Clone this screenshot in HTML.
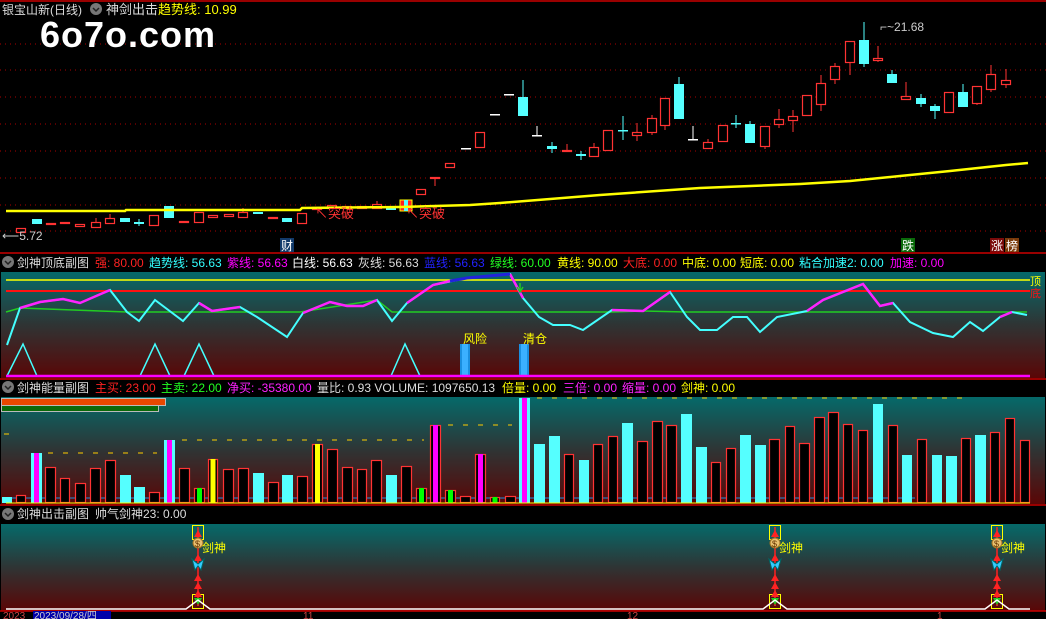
<!DOCTYPE html>
<html><head><meta charset="utf-8">
<style>
html,body{margin:0;padding:0;background:#000;width:1046px;height:619px;overflow:hidden}
svg{display:block;font-family:"Liberation Sans","Noto Sans CJK SC",sans-serif}
</style></head><body>
<svg id="s" width="1046" height="619" xmlns="http://www.w3.org/2000/svg" font-size="12">
<defs>
<linearGradient id="g" x1="0" y1="0" x2="0" y2="1">
<stop offset="0" stop-color="#056a6a"/><stop offset="0.5" stop-color="#2f3434"/><stop offset="1" stop-color="#5a0606"/>
</linearGradient>
</defs>
<rect x="0" y="0" width="1046" height="619" fill="#000"/>
<line x1="0" y1="1" x2="1046" y2="1" stroke="#c00" stroke-width="1.5"/>
<g stroke="#a00" stroke-dasharray="1,4" stroke-width="1">
<line x1="0" y1="44" x2="1046" y2="44"/><line x1="0" y1="70" x2="1046" y2="70"/><line x1="0" y1="97" x2="1046" y2="97"/><line x1="0" y1="124" x2="1046" y2="124"/><line x1="0" y1="151" x2="1046" y2="151"/><line x1="0" y1="178" x2="1046" y2="178"/><line x1="0" y1="205" x2="1046" y2="205"/><line x1="0" y1="231" x2="1046" y2="231"/>
</g>
<g id="cand"></g>
<polyline fill="none" stroke="#ff0" stroke-width="2.5" points="6,211 125,211 126,210 300,210 302,208 400,207 470,205 500,203 600,195 700,188 800,184 850,181 900,176 950,171 1006,165 1028,163"/>
<text x="2" y="14" fill="#ddd" font-size="12">银宝山新(日线)</text>
<circle cx="96" cy="9" r="6" fill="#777"/><path d="M93,8 l3,3 l3,-3" stroke="#222" fill="none" stroke-width="1.5"/>
<text x="106" y="14" fill="#ddd" font-size="13">神剑出击</text>
<text x="158" y="14" fill="#ff0" font-size="13">趋势线: 10.99</text>
<text x="40" y="47" fill="#fff" font-size="36" font-weight="bold" letter-spacing="1">6o7o.com</text>
<text x="315" y="218" fill="#f33" font-size="13">↖突破</text>
<text x="406" y="218" fill="#f33" font-size="13">↖突破</text>
<text x="2" y="240" fill="#ccc" font-size="12">⟵5.72</text>
<text x="880" y="31" fill="#ccc" font-size="12">⌐~21.68</text>
<rect x="280" y="238" width="14" height="14" fill="#123a6a"/><text x="281" y="250" fill="#fff">财</text>
<rect x="901" y="238" width="14" height="14" fill="#0a6a0a"/><text x="902" y="250" fill="#fff">跌</text>
<rect x="990" y="238" width="14" height="14" fill="#7a0a0a"/><text x="991" y="250" fill="#fff">涨</text>
<rect x="1005" y="238" width="14" height="14" fill="#7a3a0a"/><text x="1006" y="250" fill="#fff">榜</text>
<line x1="0" y1="253" x2="1046" y2="253" stroke="#c00" stroke-width="1.5"/>

<circle cx="8" cy="262" r="6" fill="#777"/><path d="M5,261 l3,3 l3,-3" stroke="#222" fill="none" stroke-width="1.5"/>
<text x="17" y="267" fill="#ddd">剑神顶底副图</text>
<text x="95" y="267" fill="#f22">强: 80.00</text>
<text x="149" y="267" fill="#3ff">趋势线: 56.63</text>
<text x="227" y="267" fill="#f0f">紫线: 56.63</text>
<text x="292" y="267" fill="#fff">白线: 56.63</text>
<text x="358" y="267" fill="#ddd">灰线: 56.63</text>
<text x="424" y="267" fill="#22f">蓝线: 56.63</text>
<text x="490" y="267" fill="#2f2">绿线: 60.00</text>
<text x="557" y="267" fill="#ff0">黄线: 90.00</text>
<text x="623" y="267" fill="#f22">大底: 0.00</text>
<text x="682" y="267" fill="#ff0">中底: 0.00</text>
<text x="740" y="267" fill="#ff0">短底: 0.00</text>
<text x="799" y="267" fill="#3ff">粘合加速2: 0.00</text>
<text x="890" y="267" fill="#f0f">加速: 0.00</text>
<rect x="1" y="272" width="1044" height="106" fill="url(#g)"/>
<line x1="6" y1="280" x2="1030" y2="280" stroke="#ff0" stroke-width="1.5"/>
<line x1="6" y1="291" x2="1030" y2="291" stroke="#f11" stroke-width="2"/>
<text x="1030" y="285" fill="#ff0" font-size="11">顶</text>
<text x="1030" y="297" fill="#f11" font-size="11">底</text>
<polyline fill="none" stroke="#2c2" stroke-width="1.5" points="6,312 20,308 127,312 139,312 155,312 183,312 300,312 377,300 392,312 520,312 612,312 643,311 687,312 1027,312"/>
<polyline fill="none" stroke="#4ff" stroke-width="2" points="7,345 20,308 40,302 63,299 80,303 110,290 127,312 139,321 155,300 183,321 199,303 212,311 240,307 257,317 287,337 303,313 330,302 347,306 363,306 377,300 392,321 407,303 433,285 467,278 510,274 523,298 539,317 553,325 570,325 583,330 612,310 643,311 670,292 687,317 700,330 717,330 733,317 747,317 760,332 777,317 807,311 823,300 863,284 880,306 893,303 910,322 933,333 953,337 970,322 983,331 1000,317 1012,312 1027,315"/>
<g fill="none" stroke="#f2f" stroke-width="2.5">
<polyline points="20,308 40,302 63,299 80,303 110,290"/>
<polyline points="199,303 212,311 240,307"/>
<polyline points="303,313 330,302 347,306 363,306 377,300"/>
<polyline points="407,303 433,285 450,281"/>
<polyline points="510,274 523,298"/>
<polyline points="612,310 643,311 670,292"/>
<polyline points="807,311 823,300 863,284 880,306 893,303"/>
<polyline points="1000,317 1012,312"/>
</g>
<polyline fill="none" stroke="#22d" stroke-width="3" points="450,281 467,278 510,274"/>
<path d="M520,283 v8 M517,287 l3,5 l3,-5" stroke="#2c2" fill="none" stroke-width="1.5"/>
<g fill="none" stroke="#4ff" stroke-width="1.5">
<polyline points="7,376 23,344 37,376"/><polyline points="140,376 155,344 170,376"/><polyline points="184,376 199,344 214,376"/><polyline points="391,376 405,344 420,376"/>
</g>
<rect x="460" y="344" width="10" height="32" fill="#1a8fe0"/><rect x="462" y="344" width="6" height="32" fill="#3bb0ff"/>
<rect x="519" y="344" width="10" height="32" fill="#1a8fe0"/><rect x="521" y="344" width="6" height="32" fill="#3bb0ff"/>
<text x="463" y="343" fill="#ff0">风险</text><text x="523" y="343" fill="#ff0">清仓</text>
<line x1="6" y1="376" x2="1030" y2="376" stroke="#f0f" stroke-width="2.5"/>
<line x1="0" y1="379" x2="1046" y2="379" stroke="#c00" stroke-width="1.5"/>

<circle cx="8" cy="387" r="6" fill="#777"/><path d="M5,386 l3,3 l3,-3" stroke="#222" fill="none" stroke-width="1.5"/>
<text x="17" y="392" fill="#ddd">剑神能量副图</text>
<text x="95" y="392" fill="#f22">主买: 23.00</text>
<text x="161" y="392" fill="#2f2">主卖: 22.00</text>
<text x="227" y="392" fill="#f2f">净买: -35380.00</text>
<text x="317" y="392" fill="#ddd">量比: 0.93  VOLUME: 1097650.13</text>
<text x="502" y="392" fill="#ff0">倍量: 0.00</text>
<text x="563" y="392" fill="#f2f">三倍: 0.00</text>
<text x="622" y="392" fill="#f2f">缩量: 0.00</text>
<text x="681" y="392" fill="#ff0">剑神: 0.00</text>
<rect x="1" y="397" width="1044" height="107" fill="url(#g)"/>
<rect x="1.5" y="398.5" width="164" height="7" fill="#e84800" stroke="#bbb"/>
<rect x="1.5" y="405.5" width="157" height="6" fill="#0a6a0a" stroke="#bbb"/>
<g stroke="#fc0" stroke-width="1" stroke-dasharray="5,10">
<line x1="48" y1="453" x2="157" y2="453"/><line x1="182" y1="440" x2="424" y2="440"/><line x1="448" y1="425" x2="512" y2="425"/><line x1="537" y1="398" x2="970" y2="398"/><line x1="4" y1="434" x2="9" y2="434"/>
</g>
<line x1="6" y1="498" x2="915" y2="498" stroke="#1a8fe0" stroke-width="1"/>
<g id="vol"></g>
<line x1="6" y1="503" x2="1030" y2="503" stroke="#ff0" stroke-width="1"/>
<line x1="0" y1="505" x2="1046" y2="505" stroke="#c00" stroke-width="1.5"/>

<circle cx="8" cy="514" r="6" fill="#777"/><path d="M5,513 l3,3 l3,-3" stroke="#222" fill="none" stroke-width="1.5"/>
<text x="17" y="518" fill="#ddd">剑神出击副图</text>
<text x="95" y="518" fill="#ddd">帅气剑神23: 0.00</text>
<rect x="1" y="524" width="1044" height="87" fill="url(#g)"/>
<g id="sig"></g>
<polyline fill="none" stroke="#fff" stroke-width="1.5" points="6,609 186,609 198,600 210,609 763,609 775,600 787,609 985,609 997,600 1009,609 1030,609"/>
<line x1="0" y1="611" x2="1046" y2="611" stroke="#c00" stroke-width="1.5"/>
<text x="3" y="619" fill="#c44" font-size="10">2023</text>
<rect x="33" y="611" width="78" height="8" fill="#00a"/>
<text x="34" y="619" fill="#ccc" font-size="10">2023/09/28/四</text>
<text x="303" y="619" fill="#c44" font-size="10">11</text>
<text x="627" y="619" fill="#c44" font-size="10">12</text>
<text x="937" y="619" fill="#c44" font-size="10">1</text>
</svg>
<script>
var NS="http://www.w3.org/2000/svg";
function el(p,t,a){var e=document.createElementNS(NS,t);for(var k in a)e.setAttribute(k,a[k]);p.appendChild(e);return e;}
var C=[[21,228,232,'r'],[37,219,224,'c'],[51,223,224,'r'],[65,222,223,'r'],[80,224,226,'r'],[96,222,227,'r',218],[110,218,223,'r',214],[125,218,222,'c'],[139,222,224,'c',219,226],[154,215,225,'r'],[169,206,218,'c'],[184,221,222,'r'],[199,212,222,'r'],[213,215,217,'r'],[229,214,216,'r'],[243,212,217,'r',208],[258,212,214,'c'],[273,217,218,'r'],[287,218,222,'c'],[302,213,223,'r'],[317,207,209,'r'],[332,205,208,'r'],[347,206,208,'r'],[362,206,208,'r'],[377,204,208,'r',201],[391,206,210,'c'],[406,200,211,'m'],[421,189,194,'r'],[435,177,178,'r',177,186],[450,163,167,'r'],[466,148,149,'w'],[480,132,147,'r'],[495,114,115,'w'],[509,94,95,'w'],[523,97,116,'c',80],[537,135,136,'w',126],[552,146,149,'c',142,153],[567,150,151,'r',144],[581,154,156,'c',151,160],[594,147,156,'r',143],[608,130,150,'r'],[623,130,131,'c',116,140],[637,132,135,'r',123,141],[652,118,132,'r',115,135],[665,98,125,'r',98,130],[679,84,119,'c',77],[693,139,140,'w',126],[708,142,148,'r',139],[723,125,141,'r'],[736,123,124,'c',115,128],[750,124,143,'c',121],[765,126,146,'r',126,149],[779,119,124,'r',109,128],[793,116,120,'r',110,132],[807,95,115,'r'],[821,83,104,'r',75,111],[835,66,79,'r',63,84],[850,41,62,'r',41,75],[864,40,64,'c',22,67],[878,58,60,'r',46,62],[892,74,83,'c',70],[906,96,99,'r',82],[921,98,104,'c',94,107],[935,106,111,'c',104,119],[949,92,112,'r'],[963,92,107,'c',84],[977,86,103,'r',86,105],[991,74,89,'r',65,92],[1006,80,84,'r',69,88]];
var g=document.getElementById('cand');
C.forEach(function(c){var x=c[0],t=c[1],b=c[2],ty=c[3],wt=c[4]||t,wb=c[5]||b;
var col=ty=='r'?'#f33':ty=='c'?'#5ff':ty=='w'?'#fff':'#f33';
if(wt<t||wb>b)el(g,'line',{x1:x,y1:wt,x2:x,y2:wb,stroke:col,'stroke-width':1});
if(ty=='r')el(g,'rect',{x:x-4.5,y:t+.5,width:9,height:Math.max(b-t,1),fill:'#000',stroke:col,'stroke-width':1.2});
else if(ty=='m'){el(g,'rect',{x:x-6,y:t,width:12,height:b-t,fill:'#f22',stroke:'#ff0'});el(g,'rect',{x:x-2,y:t,width:4,height:b-t,fill:'#5ff'});}
else el(g,'rect',{x:x-5,y:t,width:10,height:Math.max(b-t,1.5),fill:col});
});
var V=[[2,12,497,'c'],[16,26,495,'r'],[31,42,453,'c','#f0f'],[45,56,467,'r'],[60,70,478,'r'],[75,86,483,'r'],[90,101,468,'r'],[105,116,460,'r'],[120,131,475,'c'],[134,145,487,'c'],[149,160,492,'r'],[164,175,440,'c','#f0f'],[179,190,468,'r'],[194,205,488,'r','#0f0'],[208,218,459,'r','#ff0'],[223,234,469,'r'],[238,249,468,'r'],[253,264,473,'c'],[268,279,482,'r'],[282,293,475,'c'],[297,308,476,'r'],[312,323,444,'r','#ff0'],[327,338,449,'r'],[342,353,467,'r'],[357,367,469,'r'],[371,382,460,'r'],[386,397,475,'c'],[401,412,466,'r'],[416,427,488,'r','#0f0'],[430,441,425,'r','#f0f'],[445,456,490,'r','#0f0'],[460,471,496,'r'],[475,486,454,'r','#f0f'],[490,500,497,'r','#0f0'],[505,516,496,'r'],[519,530,398,'c','#f0f'],[534,545,444,'c'],[549,560,436,'c'],[564,574,454,'r'],[579,589,460,'c'],[593,603,444,'r'],[608,618,436,'r'],[622,633,423,'c'],[637,648,441,'r'],[652,663,421,'r'],[666,677,425,'r'],[681,692,414,'c'],[696,707,447,'c'],[711,721,462,'r'],[726,736,448,'r'],[740,751,435,'c'],[755,766,445,'c'],[769,780,439,'r'],[785,795,426,'r'],[799,810,443,'r'],[814,825,417,'r'],[828,839,412,'r'],[843,853,424,'r'],[858,868,430,'r'],[873,883,404,'c'],[888,898,425,'r'],[902,912,455,'c'],[917,927,439,'r'],[932,942,455,'c'],[946,957,456,'c'],[961,971,438,'r'],[975,986,435,'c'],[990,1000,432,'r'],[1005,1015,418,'r'],[1020,1030,440,'r']];
var vg=document.getElementById('vol');
V.forEach(function(v){var x=v[0],w=v[1]-v[0],t=v[2],h=503-t;
if(v[3]=='c')el(vg,'rect',{x:x,y:t,width:w,height:h,fill:'#5ff'});
else el(vg,'rect',{x:x+.5,y:t+.5,width:w-1,height:h-1,fill:'#000',stroke:'#f33','stroke-width':1.2});
if(v[4])el(vg,'rect',{x:x+w/2-2.5,y:t,width:5,height:h,fill:v[4]});
});
var sg=document.getElementById('sig');
[198,775,997].forEach(function(x){
el(sg,'line',{x1:x,y1:527,x2:x,y2:606,stroke:'#f22','stroke-width':1.5});
el(sg,'rect',{x:x-5.5,y:525.5,width:11,height:14,fill:'none',stroke:'#ff0'});
el(sg,'rect',{x:x-5.5,y:594.5,width:11,height:14,fill:'none',stroke:'#ff0'});
[532,556,576,584,592].forEach(function(y){el(sg,'path',{d:'M'+(x-4)+','+(y+5)+' L'+x+','+(y-2)+' L'+(x+4)+','+(y+5)+'Z',fill:'#f22'});});
el(sg,'circle',{cx:x,cy:543,r:5,fill:'#e8c070',stroke:'#a07020'});
var t=el(sg,'text',{x:x-3,y:547,fill:'#630','font-size':'9'});t.textContent='$';
var t2=el(sg,'text',{x:x+4,y:552,fill:'#ff0','font-size':'12'});t2.textContent='剑神';
el(sg,'path',{d:'M'+(x-6)+',559 L'+x+',564 L'+(x+6)+',559 L'+(x+3)+',570 L'+x+',566 L'+(x-3)+',570Z',fill:'#3cf',stroke:'#066'});
el(sg,'path',{d:'M'+(x-4)+',598 L'+(x+4)+',598 L'+x+',605Z',fill:'#2c2'});
});
</script>
</body></html>
